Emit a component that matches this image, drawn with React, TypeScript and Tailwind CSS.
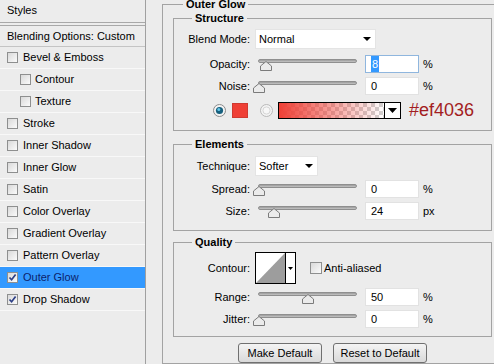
import type { ReactNode } from 'react';

type StyleItem = { label: string; indent?: boolean; checked?: boolean; active?: boolean };

const styleItems: StyleItem[] = [
  { label: 'Bevel & Emboss' },
  { label: 'Contour', indent: true },
  { label: 'Texture', indent: true },
  { label: 'Stroke' },
  { label: 'Inner Shadow' },
  { label: 'Inner Glow' },
  { label: 'Satin' },
  { label: 'Color Overlay' },
  { label: 'Gradient Overlay' },
  { label: 'Pattern Overlay' },
  { label: 'Outer Glow', checked: true, active: true },
  { label: 'Drop Shadow', checked: true },
];

function CheckBox({ checked, className = '' }: { checked?: boolean; className?: string }) {
  return (
    <span
      className={`flex h-[11px] w-[11px] shrink-0 items-center justify-center border border-[#8e8f8f] bg-gradient-to-br from-[#d9d9d9] to-[#fbfbfb] ${className}`}
    >
      {checked && (
        <svg width="9" height="9" viewBox="0 0 9 9">
          <path d="M1.5 4.5 L3.6 6.8 L7.6 1.6" fill="none" stroke="#2c3e86" strokeWidth="1.7" />
        </svg>
      )}
    </span>
  );
}

function DownArrow({ w = 8, h = 4 }: { w?: number; h?: number }) {
  return (
    <svg width={w} height={h} viewBox={`0 0 ${w} ${h}`}>
      <path d={`M0 0 H${w} L${w / 2} ${h} Z`} fill="#000" />
    </svg>
  );
}

function Thumb({ pos }: { pos: string }) {
  return (
    <svg className={`absolute top-[6px] ${pos}`} width="12" height="10" viewBox="0 0 12 10">
      <path d="M0.5 9.5 V5 L6 0.5 L11.5 5 V9.5 Z" fill="#ebebeb" stroke="#7b7b7b" />
    </svg>
  );
}

function NumField({ value, unit, focused }: { value: string; unit: string; focused?: boolean }) {
  return (
    <>
      <div
        className={`ml-[3px] flex h-[18px] w-[54px] items-center border bg-white pl-[5px] ${focused ? 'border-[#8fb6de]' : 'border-[#e2e2e2]'}`}
      >
        {focused ? <span className="bg-[#3399ff] px-[1px] text-white">{value}</span> : <span>{value}</span>}
      </div>
      <span className="ml-[4px]">{unit}</span>
    </>
  );
}

function SliderRow({ label, value, unit, thumb, focused, className = '' }: {
  label: string; value: string; unit: string; thumb: string; focused?: boolean; className?: string;
}) {
  return (
    <div className={`flex h-[18px] items-center ${className}`}>
      <span className="w-[76px] text-right">{label}</span>
      <div className="relative ml-[5px] h-[18px] w-[107px]">
        <div className="absolute left-[3px] top-[4px] h-[4px] w-[99px] rounded-full border border-[#8f8f8f] bg-gradient-to-b from-[#9a9a9a] to-[#c6c6c6]" />
        <Thumb pos={thumb} />
      </div>
      <NumField value={value} unit={unit} focused={focused} />
    </div>
  );
}

function Group({ title, className = '', children }: { title: string; className?: string; children: ReactNode }) {
  return (
    <fieldset className={`w-[319px] border border-[#a3a3a3] ${className}`}>
      <legend className="ml-[18px] px-[3px] font-bold leading-[9px]">{title}</legend>
      {children}
    </fieldset>
  );
}

function Radio({ on }: { on?: boolean }) {
  return (
    <svg width="13" height="13" viewBox="0 0 13 13" className="shrink-0">
      <circle cx="6.5" cy="6.5" r="6" fill="#f3f3f3" stroke={on ? '#8a8a8a' : '#b9b9b9'} />
      {on ? (
        <>
          <circle cx="6.5" cy="6.5" r="3.6" fill="#17607e" />
          <circle cx="5.8" cy="5.6" r="1.5" fill="#63c8ea" />
        </>
      ) : (
        <circle cx="6.5" cy="6.5" r="3.6" fill="#f7f7f7" stroke="#d6d6d6" />
      )}
    </svg>
  );
}

function Button({ children, w }: { children: ReactNode; w: string }) {
  return (
    <div className={`flex h-[20px] ${w} items-center justify-center rounded-[3px] border border-[#707070] bg-gradient-to-b from-[#f4f4f4] to-[#d9d9d9]`}>
      {children}
    </div>
  );
}

export default function App() {
  return (
    <div className="flex h-[364px] w-[494px] overflow-hidden bg-[#ececec] font-['Liberation_Sans',Arial,sans-serif] text-[11px] text-black">
      {/* Styles list */}
      <div className="flex h-full w-[146px] shrink-0 flex-col border-r border-[#a0a0a0]">
        <div className="flex h-[23px] items-center border-b border-[#a8a8a8] pl-[7px] pb-[1px]">Styles</div>
        <div className="h-[2px]" />
        <div className="flex h-[22px] items-center border-y border-t-[#a8a8a8] border-b-[#c4c4c4] pl-[7px]">
          Blending Options: Custom
        </div>
        {styleItems.map((s) => (
          <div
            key={s.label}
            className={`flex h-[22px] items-center border-b border-[#f8f8f8] ${s.active ? 'bg-[#3399ff] text-[#0c1f6b]' : ''}`}
          >
            <CheckBox checked={s.checked} className={s.indent ? 'ml-[20px]' : 'ml-[7px]'} />
            <span className={s.indent ? 'ml-[4px]' : 'ml-[5px]'}>{s.label}</span>
          </div>
        ))}
      </div>

      {/* Outer Glow options */}
      <fieldset className="ml-[16px] w-[341px] shrink-0 border border-[#a3a3a3] px-[10px] pt-[5px] pb-[20px]">
        <legend className="ml-[10px] px-[3px] font-bold leading-[9px]">Outer Glow</legend>

        <Group title="Structure" className="pt-[6px] pb-[11px]">
          <div className="flex h-[20px] items-center">
            <span className="w-[76px] text-right">Blend Mode:</span>
            <div className="ml-[5px] flex h-[20px] w-[121px] items-center justify-between border border-[#e4e4e4] bg-white pl-[3px] pr-[4px]">
              <span>Normal</span>
              <DownArrow />
            </div>
          </div>
          <SliderRow className="mt-[6px]" label="Opacity:" value="8" unit="%" thumb="left-[5px]" focused />
          <SliderRow className="mt-[4px]" label="Noise:" value="0" unit="%" thumb="left-[-2px]" />
          <div className="mt-[6px] flex h-[18px] items-center pl-[39px]">
            <Radio on />
            <span className="ml-[6px] h-[15px] w-[16px] border border-[#cf3a31] bg-[#ef4036]" />
            <span className="ml-[12px]"><Radio /></span>
            <div className="ml-[5px] flex h-[17px] w-[123px] border border-black">
              <div className="flex-1 bg-[linear-gradient(to_right,#ef4036,rgba(239,64,54,0.55)_45%,rgba(239,64,54,0)),repeating-conic-gradient(#d0d0d0_0_25%,#ffffff_0_50%)] [background-size:100%_100%,8px_8px]" />
              <div className="flex w-[16px] items-center justify-center border-l border-black bg-white">
                <DownArrow w={9} h={5} />
              </div>
            </div>
            <span className="ml-[8px] font-['Liberation_Sans',Arial,sans-serif] text-[18px] leading-[18px] text-[#a31d22]">#ef4036</span>
          </div>
        </Group>

        <Group title="Elements" className="mt-[9px] pt-[7px] pb-[10px]">
          <div className="flex h-[20px] items-center">
            <span className="w-[76px] text-right">Technique:</span>
            <div className="ml-[5px] flex h-[20px] w-[63px] items-center justify-between border border-[#e4e4e4] bg-white pl-[3px] pr-[4px]">
              <span>Softer</span>
              <DownArrow />
            </div>
          </div>
          <SliderRow className="mt-[4px]" label="Spread:" value="0" unit="%" thumb="left-[-2px]" />
          <SliderRow className="mt-[4px]" label="Size:" value="24" unit="px" thumb="left-[13px]" />
        </Group>

        <Group title="Quality" className="mt-[7px] pt-[5px] pb-[8px]">
          <div className="flex h-[32px] items-center">
            <span className="w-[76px] text-right">Contour:</span>
            <div className="ml-[5px] flex h-[32px] w-[41px] border border-black bg-white">
              <svg width="29" height="30" viewBox="0 0 29 30">
                <path d="M0 30 L29 0 V30 Z" fill="#9d9d9d" />
              </svg>
              <div className="flex flex-1 items-center justify-center border-l border-black">
                <DownArrow w={5} h={3} />
              </div>
            </div>
            <CheckBox className="ml-[14px] h-[12px] w-[12px]" />
            <span className="ml-[2px]">Anti-aliased</span>
          </div>
          <SliderRow className="mt-[4px]" label="Range:" value="50" unit="%" thumb="left-[47px]" />
          <SliderRow className="mt-[4px]" label="Jitter:" value="0" unit="%" thumb="left-[-2px]" />
        </Group>

        <div className="mt-[6px] flex justify-center gap-[11px]">
          <Button w="w-[84px]">Make Default</Button>
          <Button w="w-[94px]">Reset to Default</Button>
        </div>
      </fieldset>
    </div>
  );
}
